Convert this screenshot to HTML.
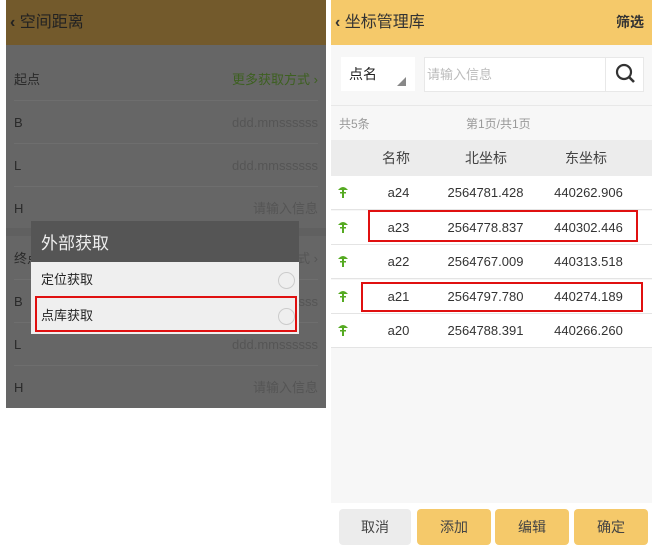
<!DOCTYPE html><html><head><meta charset="utf-8"><style>
*{margin:0;padding:0;box-sizing:border-box}
body{width:652px;height:547px;background:#fff;font-family:"Liberation Sans","Noto Sans CJK SC",sans-serif;position:relative;overflow:hidden}
.a{position:absolute}
.L{left:6px;top:0;width:320px;height:408px;background:#666}
.lh{left:0;top:0;width:320px;height:45px;background:#735a2c;color:#222;font-size:16px;line-height:45px;padding-left:4px}
.row{left:8px;width:304px;height:43px;border-bottom:1px solid #6e6e6e;font-size:13px;color:#2a2a2a;line-height:43px}
.row span{position:absolute;right:0;color:#555}
.R{left:331px;top:0;width:321px;height:547px;background:#f7f7f7}
.rh{left:0;top:0;width:321px;height:45px;background:#f5c96a;font-size:16px;line-height:45px;color:#333;padding-left:4px}
.tr{left:0;width:321px;height:34px;background:#fff;border-bottom:1px solid #e4e4e4;font-size:13px;color:#333;line-height:34px}
.tr div{position:absolute;text-align:center}
.tr svg{position:absolute;left:6px;top:9px}
.btn{top:509px;height:36px;border-radius:4px;background:#f5c96a;font-size:14px;color:#444;text-align:center;line-height:36px;width:72px}
.red{border:2px solid #e01010}
b.ch{font-weight:bold}
</style></head><body>
<div class="a L">
<div class="a lh"><b class="ch">‹</b> 空间距离</div>
<div class="a row" style="top:58px">起点<span style="color:#3d6020">更多获取方式 ›</span></div>
<div class="a row" style="top:101px">B<span>ddd.mmssssss</span></div>
<div class="a row" style="top:144px">L<span>ddd.mmssssss</span></div>
<div class="a row" style="top:187px;border:none">H<span>请输入信息</span></div>
<div class="a" style="left:0;top:228px;width:320px;height:8px;background:#606060"></div>
<div class="a row" style="top:237px">终点<span>方式 ›</span></div>
<div class="a row" style="top:280px">B<span>ddd.mmssssss</span></div>
<div class="a row" style="top:323px">L<span>ddd.mmssssss</span></div>
<div class="a row" style="top:366px;border:none">H<span>请输入信息</span></div>
<div class="a" style="left:25px;top:221px;width:268px;height:41px;background:#555;color:#eee;font-size:17px;line-height:46px;padding-left:10px">外部获取</div>
<div class="a" style="left:25px;top:262px;width:268px;height:72px;background:#efefef"></div>
<div class="a" style="left:35px;top:262px;font-size:13px;color:#222;line-height:36px">定位获取</div>
<div class="a" style="left:272px;top:272px;width:17px;height:17px;border:1px solid #ccc;border-radius:50%"></div>
<div class="a red" style="left:29px;top:296px;width:262px;height:36px"></div>
<div class="a" style="left:35px;top:298px;font-size:13px;color:#222;line-height:36px">点库获取</div>
<div class="a" style="left:272px;top:308px;width:17px;height:17px;border:1px solid #ccc;border-radius:50%"></div>
</div>
<div class="a R">
<div class="a rh"><b class="ch">‹</b> 坐标管理库<span style="position:absolute;right:8px;font-weight:bold;font-size:14px">筛选</span></div>
<div class="a" style="left:10px;top:57px;width:74px;height:34px;background:#fff;font-size:14px;color:#222;line-height:34px;padding-left:8px">点名<span style="position:absolute;left:56px;top:20px;width:0;height:0;border-left:9px solid transparent;border-bottom:9px solid #888"></span></div>
<div class="a" style="left:93px;top:57px;width:220px;height:35px;background:#fff;border:1px solid #e8e8e8;font-size:13px;color:#bbb;line-height:33px;padding-left:2px">请输入信息
<div class="a" style="right:0;top:0;width:38px;height:33px;border-left:1px solid #e8e8e8"><svg width="38" height="33"><circle cx="18" cy="14" r="7" fill="none" stroke="#333" stroke-width="2.2"/><line x1="23" y1="19" x2="28" y2="24" stroke="#333" stroke-width="2.6"/></svg></div></div>
<div class="a" style="left:0;top:105px;width:321px;height:1px;background:#e8e8e8"></div>
<div class="a" style="left:8px;top:115px;font-size:12px;color:#999">共5条</div>
<div class="a" style="left:135px;top:115px;font-size:12px;color:#999">第1页/共1页</div>
<div class="a tr" style="top:140px;background:#ececec;height:36px;line-height:36px;border:none;font-size:14px;color:#444"><div style="left:30px;width:70px">名称</div><div style="left:115px;width:80px">北坐标</div><div style="left:215px;width:80px">东坐标</div></div>
<div class="a tr" style="top:176px"><svg width="12" height="14"><path d="M1 5 Q6 -1 11 5 Z" fill="#5a2"/><rect x="5" y="4" width="2" height="9" fill="#5a2"/><rect x="3" y="7" width="6" height="1.5" fill="#5a2"/></svg><div style="left:30px;width:75px">a24</div><div style="left:112px;width:85px">2564781.428</div><div style="left:215px;width:85px">440262.906</div></div>
<div class="a tr" style="top:211px"><svg width="12" height="14"><path d="M1 5 Q6 -1 11 5 Z" fill="#5a2"/><rect x="5" y="4" width="2" height="9" fill="#5a2"/><rect x="3" y="7" width="6" height="1.5" fill="#5a2"/></svg><div style="left:30px;width:75px">a23</div><div style="left:112px;width:85px">2564778.837</div><div style="left:215px;width:85px">440302.446</div></div>
<div class="a tr" style="top:245px"><svg width="12" height="14"><path d="M1 5 Q6 -1 11 5 Z" fill="#5a2"/><rect x="5" y="4" width="2" height="9" fill="#5a2"/><rect x="3" y="7" width="6" height="1.5" fill="#5a2"/></svg><div style="left:30px;width:75px">a22</div><div style="left:112px;width:85px">2564767.009</div><div style="left:215px;width:85px">440313.518</div></div>
<div class="a tr" style="top:280px"><svg width="12" height="14"><path d="M1 5 Q6 -1 11 5 Z" fill="#5a2"/><rect x="5" y="4" width="2" height="9" fill="#5a2"/><rect x="3" y="7" width="6" height="1.5" fill="#5a2"/></svg><div style="left:30px;width:75px">a21</div><div style="left:112px;width:85px">2564797.780</div><div style="left:215px;width:85px">440274.189</div></div>
<div class="a tr" style="top:314px"><svg width="12" height="14"><path d="M1 5 Q6 -1 11 5 Z" fill="#5a2"/><rect x="5" y="4" width="2" height="9" fill="#5a2"/><rect x="3" y="7" width="6" height="1.5" fill="#5a2"/></svg><div style="left:30px;width:75px">a20</div><div style="left:112px;width:85px">2564788.391</div><div style="left:215px;width:85px">440266.260</div></div>
<div class="a red" style="left:37px;top:210px;width:270px;height:32px"></div>
<div class="a red" style="left:30px;top:282px;width:282px;height:30px"></div>
<div class="a" style="left:0;top:503px;width:321px;height:44px;background:#fff"></div>
<div class="a btn" style="left:8px;background:#ececec">取消</div>
<div class="a btn" style="left:86px;width:74px">添加</div>
<div class="a btn" style="left:164px;width:74px">编辑</div>
<div class="a btn" style="left:243px;width:74px">确定</div>
</div>
</body></html>
